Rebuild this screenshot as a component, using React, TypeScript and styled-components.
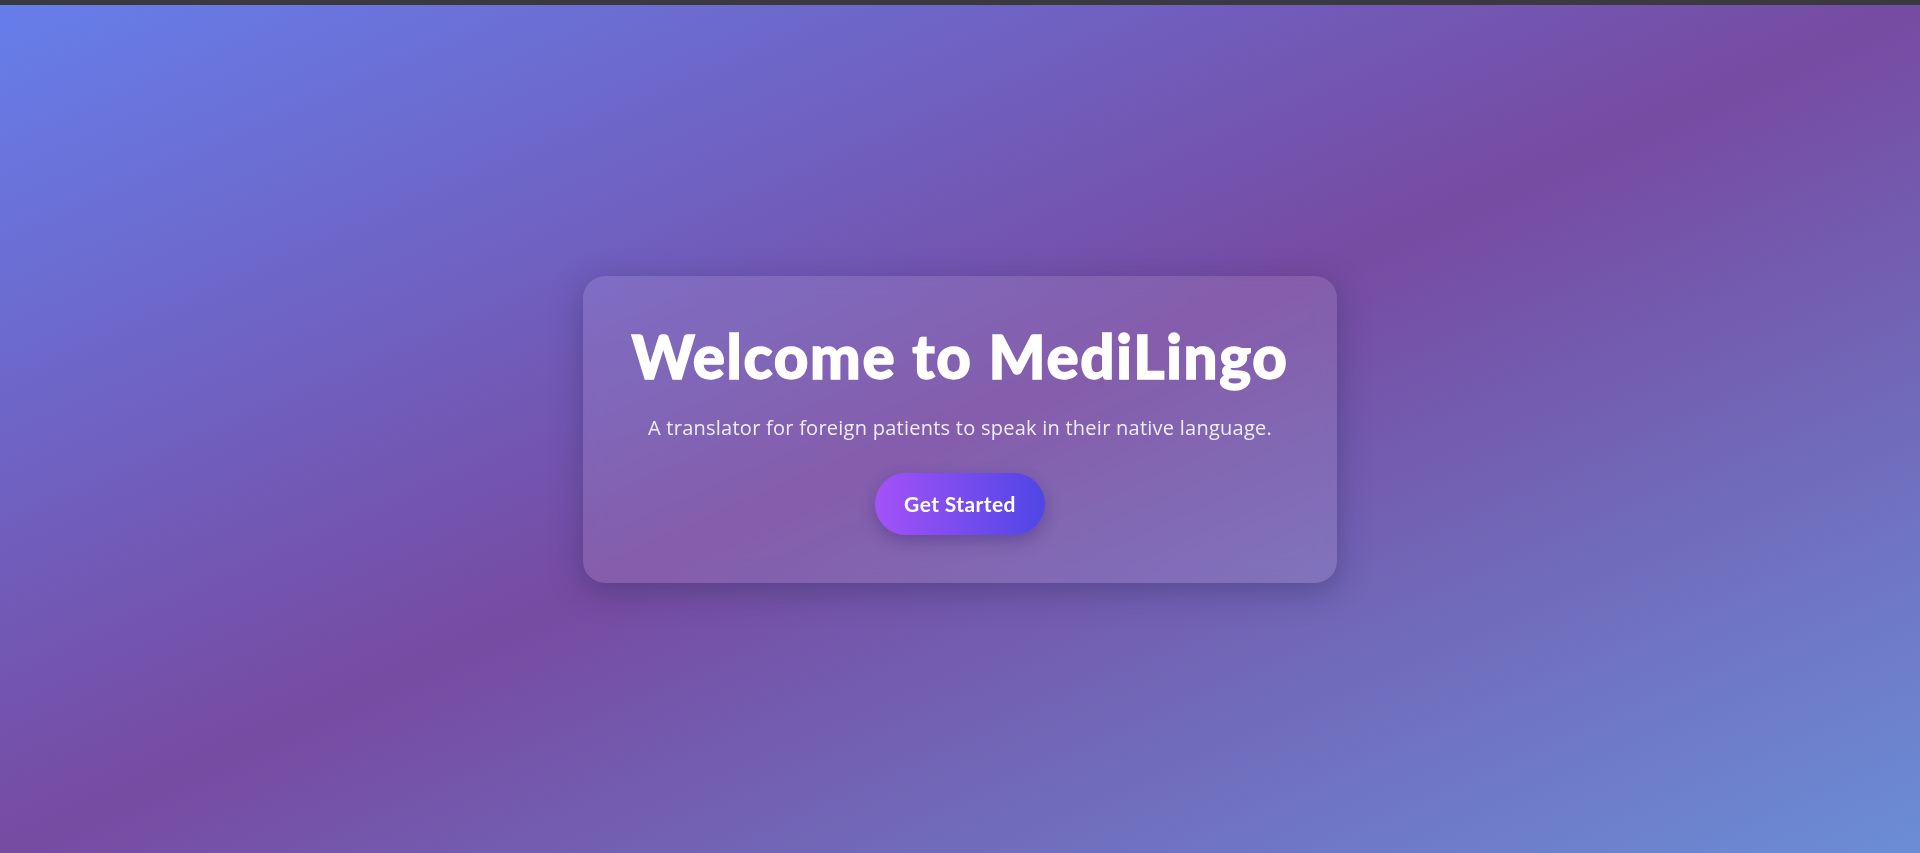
import React from 'react'
import styled, { createGlobalStyle } from 'styled-components'

const GlobalStyles = createGlobalStyle`
  html,
  body {
    margin: 0;
    padding: 0;
  }
  body {
    font-family: Lato, "Open Sans", "Liberation Sans", sans-serif;
  }
`

const Page = styled.div`
  display: flex;
  flex-direction: column;
  min-height: 100vh;
`

const TopBar = styled.div`
  height: 5px;
  background: #3a393f;
  flex-shrink: 0;
`

const Hero = styled.main`
  flex: 1;
  display: flex;
  align-items: center;
  justify-content: center;
  background: linear-gradient(
    to bottom right,
    #667eea 0%,
    #764ba2 50%,
    #6b8dd6 100%
  );
`

const Card = styled.section`
  display: flex;
  flex-direction: column;
  align-items: center;
  box-sizing: border-box;
  width: 754px;
  padding: 44px 48px 48px;
  border-radius: 22px;
  background: rgba(255, 255, 255, 0.1);
  backdrop-filter: blur(10px);
  box-shadow: 0 8px 32px rgba(31, 38, 80, 0.35);
  text-align: center;
`

const Title = styled.h1`
  margin: 0;
  font-size: 60px;
  font-weight: 900;
  line-height: 1.2;
  color: #ffffff;
  letter-spacing: 1.7px;
  -webkit-text-stroke: 1.4px #ffffff;
`

const Subtitle = styled.p`
  margin: 22px 0 0;
  font-family: "Open Sans", "Noto Sans", sans-serif;
  font-size: 20px;
  letter-spacing: 0.25px;
  line-height: 1.4;
  color: rgba(255, 255, 255, 0.88);
`

const StartButton = styled.button`
  margin-top: 31px;
  height: 62px;
  padding: 0 29px;
  border: none;
  border-radius: 31px;
  background: linear-gradient(90deg, #a452f7 0%, #4f46e5 100%);
  box-shadow: 0 6px 16px rgba(40, 20, 90, 0.3);
  color: #ffffff;
  font-family: inherit;
  font-size: 21px;
  font-weight: 700;
  letter-spacing: 0.4px;
  cursor: pointer;
`

export default function App() {
  return (
    <Page>
      <GlobalStyles />
      <TopBar />
      <Hero>
        <Card>
          <Title>Welcome to MediLingo</Title>
          <Subtitle>
            A translator for foreign patients to speak in their native language.
          </Subtitle>
          <StartButton>Get Started</StartButton>
        </Card>
      </Hero>
    </Page>
  )
}
